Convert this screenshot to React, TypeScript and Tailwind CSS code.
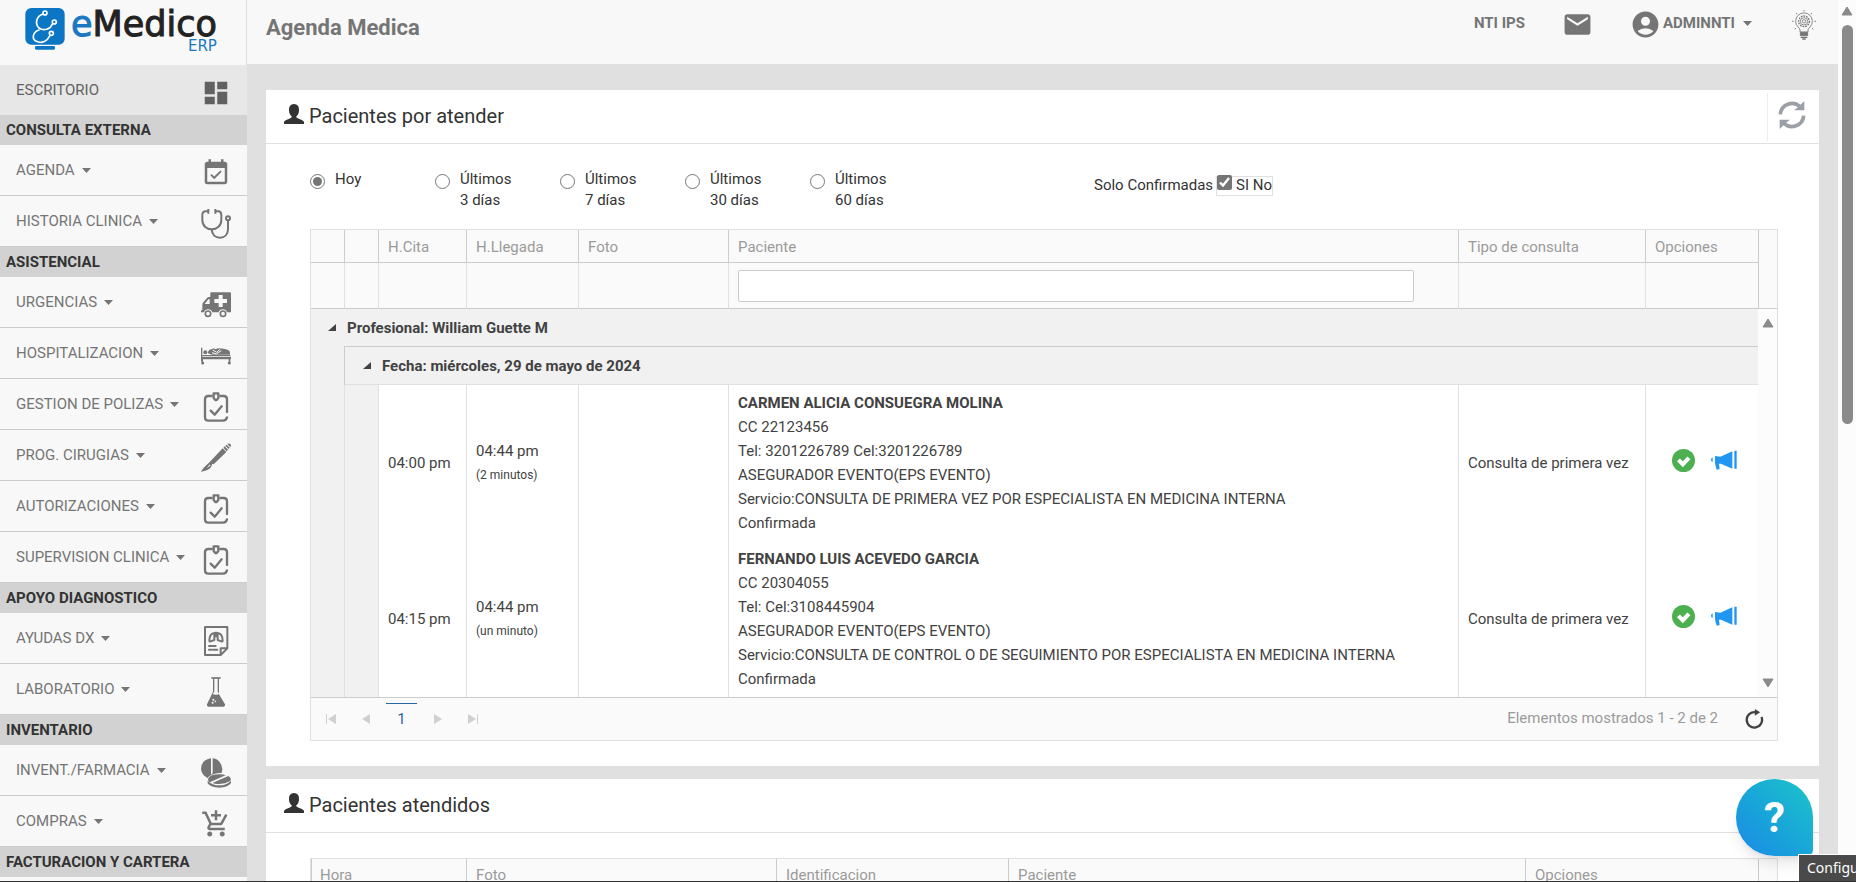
import type { ReactNode } from "react";
import {
  MdAccountCircle,
  MdAddShoppingCart,
  MdDashboard,
  MdEventAvailable,
  MdMail,
} from "react-icons/md";

const iconClass = "size-[30px] shrink-0";

function StethoscopeIcon() {
  return (
    <svg viewBox="0 0 90 90" className={iconClass} fill="none" stroke="currentColor" strokeWidth="6" strokeLinejoin="round">
      <path d="M21 7H14Q4 7 4 18V32C4 50 16 61 32 61S61 50 61 32V18Q61 7 52 7H43" />
      <path d="M22 0v14M43 0v14M32 61C33 77 43 86 57 86S81 76 81 60V36" />
      <circle cx="81" cy="28" r="6" />
    </svg>
  );
}

function AmbulanceIcon() {
  return (
    <svg viewBox="0 0 90 90" className={iconClass} fill="currentColor">
      <path d="M31 7H87Q90 7 90 10V67H78A13 13 0 0 0 53 67H34A13 13 0 0 0 9 67H0V61H4V44Q4 40 7 37L18 24Q20 21 24 21H28V10Q28 7 31 7ZM11 42H26V28H22Z" fillRule="evenodd" />
      <path d="M53 15h12v12h13v12H65v12H53V39H40V27H53Z" fill="#f8f8f8" />
      <circle cx="21" cy="71" r="8" fill="none" stroke="currentColor" strokeWidth="5" />
      <circle cx="66" cy="71" r="8" fill="none" stroke="currentColor" strokeWidth="5" />
    </svg>
  );
}

function BedIcon() {
  return (
    <svg viewBox="0 0 90 90" className={iconClass} fill="currentColor">
      <path d="M0 20H4V47H90V55H88V63H83V55H6V63H2L0 60Z" />
      <circle cx="13" cy="34" r="6" />
      <path d="M4 42H88V45H4Z" />
      <path d="M21 32Q24 25 32 25L34 23Q40 22 44 25L50 22Q76 23 85 29Q88 33 87 41H34Q25 40 21 37Z" />
      <path d="M35 27L47 34L57 25M33 35L46 39L61 29" fill="none" stroke="#f8f8f8" strokeWidth="3" />
      <circle cx="5" cy="66" r="4.5" />
      <circle cx="85" cy="66" r="4.5" />
    </svg>
  );
}

function ClipboardIcon() {
  return (
    <svg viewBox="0 0 90 90" className={iconClass} fill="none" stroke="currentColor" strokeWidth="7" strokeLinecap="round" strokeLinejoin="round">
      <path d="M32 12H22Q12 12 12 22V76Q12 86 22 86H66Q76 86 78 76M78 60V22Q78 12 68 12H58" />
      <path d="M38 4H52V18L47 24H43L38 18Z" />
      <path d="M29 56L41 68L62 43" />
    </svg>
  );
}

function ScalpelIcon() {
  return (
    <svg viewBox="0 0 90 90" className={iconClass} fill="currentColor">
      <path d="M0 86Q6 74 24 59L65 16L76 27L38 64L34 62L30 73Q20 84 0 86ZM27 64L17 76L28 68Z" fillRule="evenodd" />
      <path d="M67 14L71 10L81 20L77 25ZM73 8L77 5L86 14L83 18ZM79 3Q85-1 89 4Q91 9 88 13Z" />
    </svg>
  );
}

function XrayIcon() {
  return (
    <svg viewBox="0 0 90 90" className={iconClass} fill="none" stroke="currentColor" strokeWidth="6" strokeLinejoin="round">
      <path d="M12 3H79V67L59 87H12ZM79 67H59V87" />
      <path d="M40 21Q26 22 25 44Q25 47 29 46L40 42ZM50 21Q64 22 65 44Q65 47 61 46L50 42ZM45 17V34" />
      <path d="M24 60H44M24 71H31M36 71H49" strokeLinecap="round" />
    </svg>
  );
}

function FlaskIcon() {
  return (
    <svg viewBox="0 0 90 90" className={iconClass} fill="none" stroke="currentColor" strokeWidth="4">
      <path d="M31 3H59" strokeWidth="5" />
      <path d="M38 4V47M52 4V47" />
      <path d="M36 52H54L72 82Q74 88 68 89H22Q16 88 18 82L36 44Z" fill="currentColor" stroke="none" />
      <path d="M40 44H50V53H40Z" fill="#f8f8f8" stroke="none" />
      <circle cx="37" cy="68" r="3" fill="#f8f8f8" stroke="none" />
      <circle cx="35" cy="77" r="3" fill="#f8f8f8" stroke="none" />
      <circle cx="43" cy="73" r="2.500" fill="#f8f8f8" stroke="none" />
    </svg>
  );
}

function PillsIcon() {
  return (
    <svg viewBox="0 0 90 90" className={iconClass} fill="currentColor">
      <path d="M30 1V63Q18 62 8 52Q0 42 0 32Q1 6 30 1ZM35 1Q60 4 64 33Q64 41 61 46Q38 47 22 58L35 46Z" />
      <ellipse cx="55" cy="65" rx="36" ry="19" fill="#f8f8f8" />
      <path d="M20 68Q34 82 55 82T90 68V75Q80 89 55 89T20 76Z" />
      <path d="M26 73Q18 67 23 59Q32 49 55 49Q68 49 74 52ZM82 54Q95 62 86 70Q70 80 42 77Q36 76 34 75Z" />
    </svg>
  );
}

function BulbIcon() {
  return (
    <svg viewBox="0 0 72 90" className="h-[30px] w-6" fill="none" stroke="currentColor" strokeWidth="2.500">
      <path d="M24 66V60Q24 56 18 51A25 25 0 1 1 54 51Q48 56 48 60V66Z" />
      <circle cx="36" cy="34" r="16" strokeWidth="4" strokeDasharray="5 3" />
      <circle cx="36" cy="34" r="11" />
      <circle cx="36" cy="34" r="5" />
      <path d="M36 0V4M12 9L15 13M60 9L57 13M0 34H5M67 34H72M8 58L12 54M64 58L60 54" />
      <path d="M25 67H47V77H25Z" fill="currentColor" />
      <path d="M26 82H46M31 87H41" strokeWidth="4" />
    </svg>
  );
}

function UserIcon() {
  return (
    <svg viewBox="0 0 60 60" className="size-5 shrink-0" fill="currentColor">
      <path d="M30 0Q46 1 45 18Q45 31 37 37V40Q38 42 46 45Q59 49 60 54V60H0V54Q1 49 14 45Q22 42 23 40V37Q15 31 15 18Q14 1 30 0Z" />
    </svg>
  );
}

function RefreshIcon() {
  return (
    <svg viewBox="0 0 84 84" className="size-7" fill="none" stroke="currentColor" strokeWidth="11">
      <path d="M7 40A35 35 0 0 1 67 18M77 44A35 35 0 0 1 17 66" />
      <path d="M79 0V28H48L58 20ZM5 84V56H36L26 64Z" fill="currentColor" stroke="none" />
    </svg>
  );
}

function CheckBadge() {
  return (
    <svg viewBox="0 0 68 68" className="size-[23px]">
      <circle cx="34" cy="34" r="34" fill="#4caf50" />
      <path d="M19 32L32 45L50 26" fill="none" stroke="#fff" strokeWidth="12" />
    </svg>
  );
}

function BullhornIcon() {
  return (
    <svg viewBox="0 0 78 60" className="h-5 w-[26px]" fill="#2196f3">
      <path d="M5 22V36Q0 34 0 29T5 22ZM12 18L28 20L64 4V56L30 41H24L26 57L17 59Q13 48 12 38ZM70 2H77V56H70Z" />
    </svg>
  );
}

function ReloadIcon() {
  return (
    <svg viewBox="0 0 56 60" className="h-5 w-[19px]" fill="none" stroke="#424242" strokeWidth="7">
      <path d="M32 10A23 23 0 1 0 49 24" />
      <path d="M29 0L45 10L29 20Z" fill="#424242" stroke="none" />
    </svg>
  );
}

function Caret() {
  return (
    <svg viewBox="0 0 9 5" className="h-[5px] w-[9px]" fill="currentColor">
      <path d="M0 0H9L4.500 5Z" />
    </svg>
  );
}

type Item = { label: string; icon: ReactNode };

const groups: { title: string; items: Item[] }[] = [
  {
    title: "CONSULTA EXTERNA",
    items: [
      { label: "AGENDA", icon: <MdEventAvailable className={iconClass} /> },
      { label: "HISTORIA CLINICA", icon: <StethoscopeIcon /> },
    ],
  },
  {
    title: "ASISTENCIAL",
    items: [
      { label: "URGENCIAS", icon: <AmbulanceIcon /> },
      { label: "HOSPITALIZACION", icon: <BedIcon /> },
      { label: "GESTION DE POLIZAS", icon: <ClipboardIcon /> },
      { label: "PROG. CIRUGIAS", icon: <ScalpelIcon /> },
      { label: "AUTORIZACIONES", icon: <ClipboardIcon /> },
      { label: "SUPERVISION CLINICA", icon: <ClipboardIcon /> },
    ],
  },
  {
    title: "APOYO DIAGNOSTICO",
    items: [
      { label: "AYUDAS DX", icon: <XrayIcon /> },
      { label: "LABORATORIO", icon: <FlaskIcon /> },
    ],
  },
  {
    title: "INVENTARIO",
    items: [
      { label: "INVENT./FARMACIA", icon: <PillsIcon /> },
      { label: "COMPRAS", icon: <MdAddShoppingCart className={iconClass} /> },
    ],
  },
  { title: "FACTURACION Y CARTERA", items: [] },
];

function Logo() {
  return (
    <a href="#inicio" className="flex h-[65px] shrink-0 items-start gap-[6px] border-r border-[#e0e0e0] pt-2 pl-[25px]">
      <svg viewBox="0 0 120 126" className="h-[42px] w-10 shrink-0">
        <rect x="1" y="0" width="118" height="110" rx="18" fill="#0b76c4" />
        <rect x="30" y="114" width="60" height="11" rx="4" fill="#0b76c4" />
        <g fill="none" stroke="#fff" strokeWidth="5" strokeLinecap="round">
          <path d="M54 18C32 26 30 48 42 60C56 70 76 64 82 48" />
          <path d="M42 66C22 72 20 94 34 100C50 108 68 98 74 84" />
          <circle cx="60" cy="15" r="6" />
          <circle cx="88" cy="42" r="6" />
          <circle cx="79" cy="76" r="6" />
        </g>
      </svg>
      <span className="flex flex-col items-end font-['DejaVu_Sans',sans-serif]">
        <span className="text-[35px] leading-8 text-[#222] [-webkit-text-stroke:1px]">
          <span className="text-[#1a78c2]">e</span>Medico
        </span>
        <span className="text-[15px] leading-3 text-[#1a78c2]">ERP</span>
      </span>
    </a>
  );
}

function Sidebar() {
  return (
    <aside className="flex w-[247px] shrink-0 flex-col overflow-hidden bg-[#f8f8f8]">
      <Logo />
      <nav className="text-[15px] text-[#757575]">
        <a href="#escritorio" className="flex h-[50px] items-center justify-between bg-[#e7e7e7] pt-[5px] pr-4 pl-4 text-[#616161]">
          <span className="pb-1">ESCRITORIO</span>
          <MdDashboard className={iconClass} />
        </a>
        {groups.map((group) => (
          <section key={group.title}>
            <h2 className="flex h-[30px] items-center bg-[#d2d2d2] pl-[6px] font-bold text-[#333]">{group.title}</h2>
            {group.items.map((item) => (
              <a
                key={item.label}
                href="#modulo"
                className="flex h-[51px] items-center justify-between border-b border-[#ccc] pt-[6px] pr-4 pl-4"
              >
                <span className="flex items-center gap-[7px] pb-[6px]">
                  {item.label}
                  <Caret />
                </span>
                {item.icon}
              </a>
            ))}
          </section>
        ))}
      </nav>
    </aside>
  );
}

function TopBar() {
  return (
    <header className="flex h-16 shrink-0 items-start justify-between bg-[#f8f8f8] pr-[22px] pl-[19px] text-[15px] font-bold text-[#757575]">
      <h1 className="pt-[13px] text-[22px] leading-[30px]">Agenda Medica</h1>
      <div className="flex items-center pt-[9px]">
        <span className="pb-[2px]">NTI IPS</span>
        <button type="button" aria-label="Mensajes" className="ml-[37px]">
          <MdMail className="size-[31px]" />
        </button>
        <button type="button" className="ml-[37px] flex items-center gap-[2px]">
          <MdAccountCircle className="size-[31px]" />
          <span className="flex items-center gap-2 pb-[3px]">
            ADMINNTI
            <Caret />
          </span>
        </button>
        <button type="button" aria-label="Sugerencias" className="ml-10">
          <BulbIcon />
        </button>
      </div>
    </header>
  );
}

function CardHeader({ title, action }: { title: string; action?: ReactNode }) {
  return (
    <div className="flex h-[54px] items-center justify-between border-b border-[#e0e0e0] pl-[18px]">
      <h2 className="flex items-center gap-[5px] pb-[2px] text-xl text-[#333]">
        <span className="pb-1">
          <UserIcon />
        </span>
        {title}
      </h2>
      {action}
    </div>
  );
}

const ranges = [
  ["Hoy", ""],
  ["Últimos", "3 días"],
  ["Últimos", "7 días"],
  ["Últimos", "30 días"],
  ["Últimos", "60 días"],
];

function Filters() {
  return (
    <div className="flex h-[60px] items-start text-[15px] leading-[21px] text-[#333]">
      {ranges.map(([first, second], i) => (
        <label key={second} className="flex w-[125px] items-start gap-[10px]">
          <input
            type="radio"
            name="rango"
            defaultChecked={i === 0}
            className="mt-[5px] size-[15px] accent-[#757575]"
          />
          <span>
            {first}
            <br />
            {second}
          </span>
        </label>
      ))}
      <div className="ml-[159px] flex items-center gap-[3px] pt-[6px]">
        <label htmlFor="confirmadas">Solo Confirmadas</label>
        <span className="flex h-5 items-center gap-1 border border-[#e0e0e0]">
          <input id="confirmadas" type="checkbox" defaultChecked className="mb-[7px] size-[15px] accent-[#757575]" />
          SI No
        </span>
      </div>
    </div>
  );
}

const appointments = [
  {
    time: "04:00 pm",
    arrival: "04:44 pm",
    wait: "(2 minutos)",
    name: "CARMEN ALICIA CONSUEGRA MOLINA",
    lines: [
      "CC 22123456",
      "Tel: 3201226789 Cel:3201226789",
      "ASEGURADOR EVENTO(EPS EVENTO)",
      "Servicio:CONSULTA DE PRIMERA VEZ POR ESPECIALISTA EN MEDICINA INTERNA",
      "Confirmada",
    ],
  },
  {
    time: "04:15 pm",
    arrival: "04:44 pm",
    wait: "(un minuto)",
    name: "FERNANDO LUIS ACEVEDO GARCIA",
    lines: [
      "CC 20304055",
      "Tel: Cel:3108445904",
      "ASEGURADOR EVENTO(EPS EVENTO)",
      "Servicio:CONSULTA DE CONTROL O DE SEGUIMIENTO POR ESPECIALISTA EN MEDICINA INTERNA",
      "Confirmada",
    ],
  },
];

const headings = ["", "", "H.Cita", "H.Llegada", "Foto", "Paciente", "Tipo de consulta", "Opciones"];

function GroupLabel({ children }: { children: ReactNode }) {
  return (
    <button type="button" className="flex items-center gap-[11px] font-bold">
      <svg viewBox="0 0 8 7" className="h-[7px] w-2" fill="currentColor">
        <path d="M8 0V7H0Z" />
      </svg>
      {children}
    </button>
  );
}

function PendingTable() {
  return (
    <table className="w-full table-fixed border-separate border-spacing-0 text-left text-[15px] leading-6 text-[#424242]">
      <colgroup>
        <col className="w-[33px]" />
        <col className="w-[34px]" />
        <col className="w-[88px]" />
        <col className="w-[112px]" />
        <col className="w-[150px]" />
        <col />
        <col className="w-[187px]" />
        <col className="w-[113px]" />
        <col className="w-[19px]" />
      </colgroup>
      <thead className="bg-[#fafafa]">
        <tr className="h-[33px]">
          {headings.map((text, i) => (
            <th
              key={i}
              className="border-b border-l border-[#ccc] p-0 pt-[2px] pl-[9px] font-normal text-[#9a9a9a] first:border-l-0"
            >
              {text}
            </th>
          ))}
          <th rowSpan={2} className="border-b border-l border-[#ccc] p-0" />
        </tr>
        <tr className="h-[46px]">
          {headings.map((text, i) => (
            <td key={i} className="border-b border-l border-b-[#ccc] border-l-[#e0e0e0] p-0 pl-[9px] first:border-l-0">
              {text === "Paciente" && (
                <div className="pr-11">
                  <input
                    type="text"
                    aria-label="Filtrar paciente"
                    className="block h-8 w-full rounded-xs border border-[#ccc] bg-white px-2 outline-none"
                  />
                </div>
              )}
            </td>
          ))}
        </tr>
      </thead>
      <tbody>
        <tr className="h-[37px] bg-[#f1f1f1]">
          <td colSpan={8} className="p-0 pl-[17px]">
            <GroupLabel>Profesional: William Guette M</GroupLabel>
          </td>
          <td rowSpan={4} className="bg-[#fcfcfc] p-0 align-top">
            <div className="flex h-[388px] flex-col items-center justify-between py-[9px] text-[#8a8a8a]">
              <svg viewBox="0 0 12 10" className="h-[10px] w-3" fill="currentColor" stroke="currentColor" strokeLinejoin="round">
                <path d="M6 1L11 9H1Z" />
              </svg>
              <svg viewBox="0 0 12 10" className="h-[10px] w-3" fill="currentColor" stroke="currentColor" strokeLinejoin="round">
                <path d="M6 9L11 1H1Z" />
              </svg>
            </div>
          </td>
        </tr>
        <tr className="h-[39px] bg-[#f1f1f1]">
          <td className="p-0" />
          <td colSpan={7} className="border-t border-b border-l border-[#ccc] border-b-[#e0e0e0] p-0 pl-[18px]">
            <GroupLabel>Fecha: miércoles, 29 de mayo de 2024</GroupLabel>
          </td>
        </tr>
        {appointments.map((a) => (
          <tr key={a.name}>
            <td className="bg-[#f1f1f1] p-0" />
            <td className="border-l border-[#e0e0e0] bg-[#f1f1f1] p-0" />
            <td className="border-l border-[#e0e0e0] p-0 pl-[9px]">{a.time}</td>
            <td className="border-l border-[#e0e0e0] p-0 pl-[9px]">
              {a.arrival}
              <div className="text-xs leading-6">{a.wait}</div>
            </td>
            <td className="border-l border-[#e0e0e0] p-0" />
            <td className="border-l border-[#e0e0e0] px-[9px] py-[6px]">
              <div className="font-bold">{a.name}</div>
              {a.lines.map((line) => (
                <div key={line}>{line}</div>
              ))}
            </td>
            <td className="border-l border-[#e0e0e0] p-0 pl-[9px]">Consulta de primera vez</td>
            <td className="border-l border-[#e0e0e0] p-0 pb-[6px]">
              <div className="flex items-center justify-center gap-4 pl-1">
                <button type="button" aria-label="Confirmar">
                  <CheckBadge />
                </button>
                <button type="button" aria-label="Llamar">
                  <BullhornIcon />
                </button>
              </div>
            </td>
          </tr>
        ))}
      </tbody>
    </table>
  );
}

function PageArrow({ label, d }: { label: string; d: string }) {
  return (
    <button type="button" aria-label={label} className="flex w-[35px] justify-center text-[#d0d0d0]">
      <svg viewBox="0 0 10 10" className="size-[10px]" fill="currentColor">
        <path d={d} />
      </svg>
    </button>
  );
}

function Pager() {
  return (
    <div className="flex h-[43px] items-start justify-between border-t border-[#ccc] bg-[#fafafa] pt-[5px] pr-[13px] pl-[2px] text-[15px] text-[#9a9a9a]">
      <div className="flex items-center">
        <PageArrow label="Primera" d="M0 0H1V10H0ZM10 0V10L2 5Z" />
        <PageArrow label="Anterior" d="M9 0V10L1 5Z" />
        <button type="button" className="mx-[3px] h-[31px] w-[31px] border-t border-[#2a66a0] text-[#2a66a0]">
          1
        </button>
        <PageArrow label="Siguiente" d="M1 0V10L9 5Z" />
        <PageArrow label="Última" d="M9 0H10V10H9ZM0 0V10L8 5Z" />
      </div>
      <div className="flex h-[31px] items-center gap-[27px]">
        <span>Elementos mostrados 1 - 2 de 2</span>
        <button type="button" aria-label="Recargar">
          <ReloadIcon />
        </button>
      </div>
    </div>
  );
}

function AttendedTable() {
  return (
    <table className="w-full table-fixed border-separate border-spacing-0 text-left text-[15px] leading-6">
      <colgroup>
        <col className="w-[155px]" />
        <col className="w-[310px]" />
        <col className="w-[232px]" />
        <col />
        <col className="w-[233px]" />
        <col className="w-[19px]" />
      </colgroup>
      <thead className="bg-[#fafafa]">
        <tr className="h-[33px]">
          {["Hora", "Foto", "Identificacion", "Paciente", "Opciones"].map((text) => (
            <th key={text} className="border-b border-l border-[#ccc] p-0 pl-[9px] font-normal text-[#9a9a9a] first:pl-2">
              {text}
            </th>
          ))}
          <th className="border-b border-l border-[#ccc] p-0" />
        </tr>
      </thead>
    </table>
  );
}

function PageScrollbar() {
  return (
    <div className="flex w-[18px] shrink-0 flex-col items-center bg-[#fcfcfc] pt-[6px]">
      <svg viewBox="0 0 12 10" className="h-[10px] w-3 text-[#8a8a8a]" fill="currentColor" stroke="currentColor" strokeLinejoin="round">
        <path d="M6 1L11 9H1Z" />
      </svg>
      <div className="mt-[9px] h-[399px] w-[11px] rounded-full bg-[#8a8a8a]" />
    </div>
  );
}

export default function App() {
  return (
    <div className="relative flex h-screen overflow-hidden border-b border-[#333] bg-[#e0e0e0] font-[Roboto,'Liberation_Sans',sans-serif]">
      <Sidebar />
      <div className="flex min-w-0 flex-1 flex-col">
        <TopBar />
        <main className="flex min-h-0 flex-1 flex-col gap-[13px] overflow-hidden pt-[26px] pr-[19px] pl-[19px]">
          <section className="shrink-0 bg-white">
            <CardHeader
              title="Pacientes por atender"
              action={
                <button
                  type="button"
                  aria-label="Actualizar"
                  className="flex h-12 w-[52px] items-center justify-center border-l border-[#eee] pr-1 pb-1 text-[#9aa0a6]"
                >
                  <RefreshIcon />
                </button>
              }
            />
            <div className="pt-[25px] pr-[41px] pb-[25px] pl-[44px]">
              <Filters />
              <div className="border border-[#e0e0e0]">
                <PendingTable />
                <Pager />
              </div>
            </div>
          </section>
          <section className="shrink-0 bg-white">
            <CardHeader title="Pacientes atendidos" />
            <div className="pt-[25px] pr-[41px] pb-[25px] pl-[44px]">
              <div className="border border-[#e0e0e0]">
                <AttendedTable />
              </div>
            </div>
          </section>
        </main>
      </div>
      <PageScrollbar />
      <button
        type="button"
        aria-label="Ayuda"
        className="absolute right-[43px] bottom-[25px] flex size-[77px] items-center justify-center rounded-t-[39px] rounded-br-[6px] rounded-bl-[39px] bg-linear-to-tr from-[#1e88e5] to-[#20c4c8] text-[42px] font-bold text-white shadow-lg"
      >
        ?
      </button>
      <div
        role="tooltip"
        className="absolute right-0 bottom-0 flex h-[27px] w-[58px] items-center overflow-hidden border-t border-l border-white bg-[#4a4a4a] pl-2 font-['Noto_Sans',sans-serif] text-sm whitespace-nowrap text-white"
      >
        Configu
      </div>
    </div>
  );
}
